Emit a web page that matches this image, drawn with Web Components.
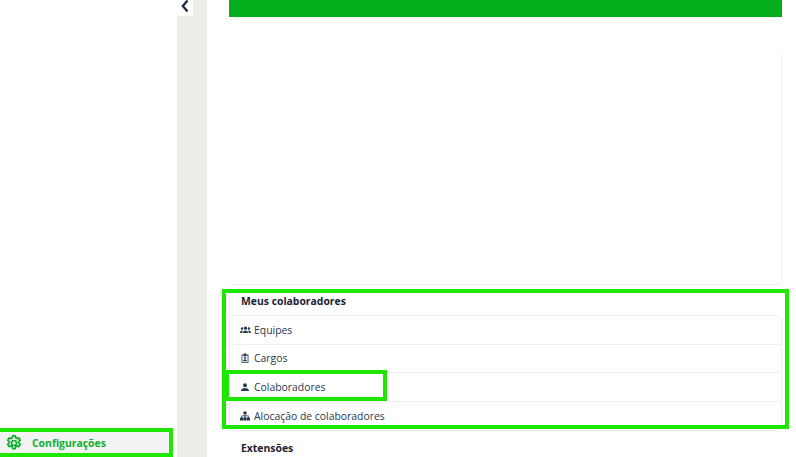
<!DOCTYPE html>
<html lang="pt-BR">
<head>
<meta charset="utf-8">
<title>Configurações</title>
<style>
  html, body { margin: 0; height: 100%; overflow: hidden; background: #fff; }
  body { font-family: "Open Sans", "Noto Sans", sans-serif; }
</style>
</head>
<body>
<app-shell>
  <side-nav slot="nav"></side-nav>
  <settings-page slot="main"></settings-page>
</app-shell>

<script>
const ICONS = {
  team: '<path d="M8 8.400a2.400 2.400 0 1 0 0-4.800 2.400 2.400 0 0 0 0 4.800zM3 8.400a1.800 1.800 0 1 0 0-3.600 1.800 1.800 0 0 0 0 3.600zM13 8.400a1.800 1.800 0 1 0 0-3.600 1.800 1.800 0 0 0 0 3.600zM4.200 13c0-2.300 1.800-3.700 3.800-3.700s3.800 1.400 3.800 3.700zM0 13c0-1.900 1.200-3.400 2.900-3.400.5 0 .9.100 1.300.2-.7.700-1 1.900-1 3.200zM16 13c0-1.900-1.200-3.400-2.900-3.400-.5 0-.9.100-1.300.2.700.7 1 1.900 1 3.200z"/>',
  badge: '<path fill-rule="evenodd" d="M2.500 2.500H6V.8h4v1.700h3.500v13h-11zM3.800 3.800v10.400h8.400V3.800h-2v1.200H5.800V3.800zM8 5.800a1.700 1.700 0 1 1 0 3.400 1.700 1.700 0 0 1 0-3.400zM5 13c0-1.800 1.400-2.900 3-2.900s3 1.100 3 2.900z"/>',
  person: '<path d="M8 8.200a3.100 3.100 0 1 0 0-6.200 3.100 3.100 0 0 0 0 6.200zM1.500 14.500c0-3 3.300-4.800 6.500-4.800s6.500 1.800 6.500 4.800z"/>',
  org: '<path d="M5.500.8h5v4.400H8.800v2h5v3.200H16V15h-5v-4.600h1.600V8.500H8.800v1.900h1.700V15h-5v-4.600h1.700V8.500H3.400v1.900H5V15H0v-4.600h2.200V7.200h5v-2H5.500z"/>',
  gear: '<path fill="none" stroke="currentColor" stroke-width="2.300" stroke-linejoin="round" d="M10.200 2.200h3.600l.5 2.600 1.600.9 2.500-.9 1.800 3.100-2 1.700v1.800l2 1.700-1.800 3.100-2.500-.9-1.600.9-.5 2.600h-3.600l-.5-2.600-1.600-.9-2.500.9-1.800-3.100 2-1.700V9.600l-2-1.700 1.800-3.100 2.500.9 1.600-.9z"/><circle cx="12" cy="11.500" r="3.300" fill="none" stroke="currentColor" stroke-width="2.200"/>'
};

// small inline svg, glyph picked by name attribute
class UiIcon extends HTMLElement {
  connectedCallback() {
    const name = this.getAttribute('name');
    const size = this.getAttribute('size') || 11;
    const box = name === 'gear' ? '1.500 1 21 21' : '0 0 16 16';
    this.attachShadow({ mode: 'open' }).innerHTML = `
      <style>
        :host { display: inline-flex; flex: none; color: inherit; }
        svg { display: block; fill: currentColor; }
      </style>
      <svg width="${size}" height="${size}" viewBox="${box}">${ICONS[name]}</svg>
    `;
  }
}
customElements.define('ui-icon', UiIcon);

class AppShell extends HTMLElement {
  constructor() {
    super();
    this.attachShadow({ mode: 'open' }).innerHTML = `
      <style>
        :host { display: grid; grid-template-columns: 177px 30px 589px; grid-template-rows: 457px; height: 457px; width: 796px; overflow: hidden; }
        .rail { background: #eeede9; }
        .tab { width: 16px; height: 16px; background: #fff; display: flex; justify-content: center; }
        .tab svg { display: block; }
      </style>
      <slot name="nav"></slot>
      <div class="rail">
        <div class="tab">
          <svg width="8" height="12" viewBox="0 0 8 12"><path d="M6.500 .5 1.800 6l4.700 5.500" fill="none" stroke="#16243a" stroke-width="2.200"/></svg>
        </div>
      </div>
      <slot name="main"></slot>
    `;
  }
}
customElements.define('app-shell', AppShell);

class SideNav extends HTMLElement {
  constructor() {
    super();
    this.attachShadow({ mode: 'open' }).innerHTML = `
      <style>
        :host { display: flex; flex-direction: column; justify-content: flex-end; background: #fff; position: relative; padding: 0 9px 2px 0; }
        .item {
          height: 25px; background: #f3f3f3; display: flex; align-items: center; gap: 10px;
          padding-left: 6px; color: #0fb02a; font: 700 10.400px "Open Sans", sans-serif;
        }
        .mark { position: absolute; left: -4px; top: 428px; width: 169px; height: 21px; border: 4px solid #1fe600; }
      </style>
      <div class="item"><ui-icon name="gear" size="16"></ui-icon><span>Configurações</span></div>
      <div class="mark"></div>
    `;
  }
}
customElements.define('side-nav', SideNav);

class NavRow extends HTMLElement {
  constructor() {
    super();
    this.attachShadow({ mode: 'open' }).innerHTML = `
      <style>
        :host { display: flex; align-items: center; gap: 4px; height: 28.500px; box-sizing: border-box; padding-left: 10px; border-bottom: 1px solid #f0f0f0; color: #27374d; font: 400 10.400px "Open Sans", sans-serif; }
        :host(:last-child) { border-bottom: 0; }
        .ic { width: 10px; display: flex; justify-content: center; }
      </style>
      <span class="ic"><ui-icon name="${this.getAttribute('icon')}" size="${this.getAttribute('icon-size') || 10}"></ui-icon></span>
      <slot></slot>
    `;
  }
}
customElements.define('nav-row', NavRow);

class SettingsGroup extends HTMLElement {
  constructor() {
    super();
    this.attachShadow({ mode: 'open' }).innerHTML = `
      <style>
        :host { display: block; }
        h3 { margin: 0 0 2px; height: 24px; padding-left: 12px; display: flex; align-items: center; color: #1d2433; font: 700 10.400px "Open Sans", sans-serif; }
        .list { border: 1px solid #f0f0f0; border-radius: 4px; box-shadow: 0 1px 1px #f6f6f6; }
        .list:empty { border: 0; }
      </style>
      <h3>${this.getAttribute('title')}</h3>
      <div class="list"><slot></slot></div>
    `;
  }
}
customElements.define('settings-group', SettingsGroup);

class SettingsPage extends HTMLElement {
  constructor() {
    super();
    this.attachShadow({ mode: 'open' }).innerHTML = `
      <style>
        :host { display: block; position: relative; padding-left: 22px; padding-right: 14px; overflow: hidden; }
        .banner { height: 17px; background: #03ae1c; }
        .blank { height: 232px; margin: 36px 0 4px; border: 1px solid #f0f0f0; border-width: 0 1px 1px 0; border-radius: 4px; box-sizing: border-box; }
        .big { position: absolute; left: 15px; top: 289px; width: 559px; height: 132px; border: 4px solid #1fe600; pointer-events: none; }
        .small { position: absolute; left: 18px; top: 370px; width: 154px; height: 23px; border: 4px solid #1fe600; pointer-events: none; }
      </style>
      <div class="banner"></div>
      <div class="blank"></div>
      <slot></slot>
      <div class="big"></div>
      <div class="small"></div>
    `;
    this.innerHTML = `
      <settings-group title="Meus colaboradores">
        <nav-row icon="team" icon-size="11">Equipes</nav-row>
        <nav-row icon="badge">Cargos</nav-row>
        <nav-row icon="person">Colaboradores</nav-row>
        <nav-row icon="org">Alocação de colaboradores</nav-row>
      </settings-group>
      <settings-group title="Extensões" style="margin-top:5px"></settings-group>
    `;
  }
}
customElements.define('settings-page', SettingsPage);
</script>
</body>
</html>
